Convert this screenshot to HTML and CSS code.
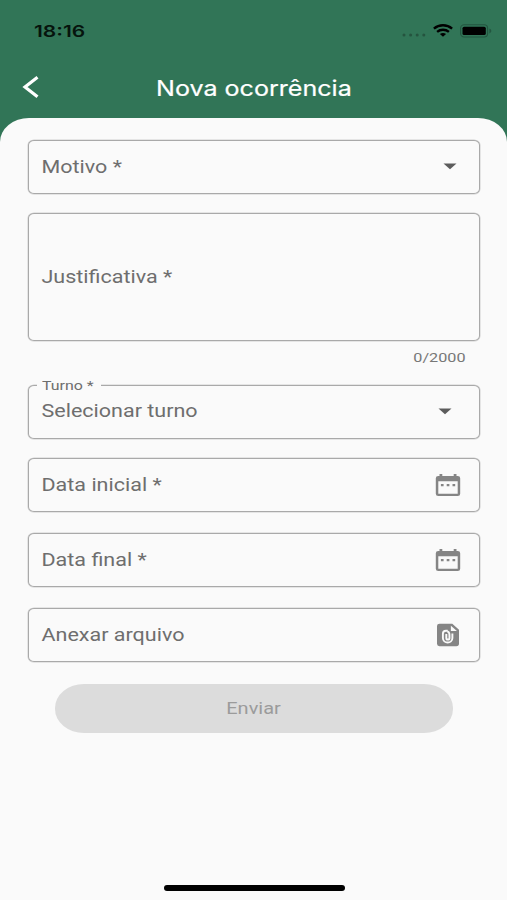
FILE: index.html
```html
<!DOCTYPE html>
<html lang="pt-BR">
<head>
<meta charset="utf-8">
<title>Nova ocorrência</title>
<link rel="stylesheet" href="styles.css">
</head>
<body>
<div class="screen">
  <div class="status">
    <span class="time">18:16</span>
    <div class="status-icons">
      <svg class="dots" width="24" height="4" viewBox="0 0 24 4"><g fill="#25543f"><circle cx="2" cy="2" r="1.5"/><circle cx="8.6" cy="2" r="1.5"/><circle cx="15.2" cy="2" r="1.5"/><circle cx="21.8" cy="2" r="1.5"/></g></svg>
      <svg class="wifi" width="20" height="13" viewBox="0 0 20 13"><g fill="none" stroke="#000" stroke-width="2.4"><path d="M.9 4.6C6.1.1 13.9.1 19.1 4.6"/><path d="M4.1 7.9c3.400-2.800 8.400-2.800 11.800 0"/></g><path d="M6.900 10c1.800-1.300 4.400-1.300 6.200 0L10 12.700z"/></svg>
      <svg class="battery" width="32" height="14" viewBox="0 0 32 14"><rect x=".6" y=".8" width="27" height="12.200" rx="3.500" fill="none" stroke="#235640" stroke-width="1.100"/><rect x="2.500" y="2.700" width="23.300" height="8.400" rx="1.600"/><path d="M29.400 4.600q2 1 2 2.400t-2 2.400z" fill="#235640"/></svg>
    </div>
  </div>
  <header class="appbar">
    <svg class="back" width="18" height="24" viewBox="0 0 18 24"><path d="M15.500 2.300 3 12l12.500 9.700" fill="none" stroke="#fff" stroke-width="3.200"/></svg>
    <h1 class="title">Nova ocorrência</h1>
  </header>
  <main class="sheet">
    <div class="field motivo"><span class="label">Motivo *</span><svg class="arrow" width="14" height="7" viewBox="0 0 14 7"><path d="M.5.5h13L7 6.300z"/></svg></div>
    <div class="field area"><span class="label">Justificativa *</span></div>
    <div class="counter"><span class="count">0/2000</span></div>
    <div class="field turno"><span class="float"><span class="float-text">Turno *</span></span><span class="label">Selecionar turno</span><svg class="arrow arrow-in" width="14" height="7" viewBox="0 0 14 7"><path d="M.5.5h13L7 6.300z"/></svg></div>
    <div class="field inicial"><span class="label">Data inicial *</span>
      <svg class="icon" width="26" height="24" viewBox="0 0 26 24"><path fill-rule="evenodd" d="M4.500 1h2.800v2h11.400V1h2.800v2h1.200q2.500 0 2.500 2.200v15.500q0 2.300-2.500 2.300H3.300Q.8 23 .8 20.700V5.200Q.8 3 3.300 3h1.200zM3.300 8.300v12.500h19.400V8.300zM5.900 10.900h2.700v2.300H5.900zm5.800 0h2.700v2.300h-2.700zm5.800 0h2.700v2.300h-2.700z"/></svg></div>
    <div class="field final"><span class="label">Data final *</span>
      <svg class="icon" width="26" height="24" viewBox="0 0 26 24"><path fill-rule="evenodd" d="M4.500 1h2.800v2h11.400V1h2.800v2h1.200q2.500 0 2.500 2.200v15.500q0 2.300-2.500 2.300H3.300Q.8 23 .8 20.700V5.200Q.8 3 3.300 3h1.200zM3.300 8.300v12.500h19.400V8.300zM5.900 10.900h2.700v2.300H5.900zm5.800 0h2.700v2.300h-2.700zm5.800 0h2.700v2.300h-2.700z"/></svg></div>
    <div class="field anexar"><span class="label">Anexar arquivo</span>
      <svg class="icon" width="26" height="24" viewBox="0 0 26 24"><path d="M4.500.8h12.800l6.700 6v14q0 2.400-2.600 2.400H4.500Q2 23.200 2 20.800V3.100Q2 .8 4.500.8z"/><path d="M15.900 2.700v5.200h6z" fill="#fafafa"/><path d="M12.700 7.700H11q-3.100 0-3.100 3v4.200c0 6.100 9.500 6.100 9.500 0V10.500M12.500 8.500c2 .7 2 1.700 2 6.400 0 2.200-3.200 2.200-3.200 0v-3.800" fill="none" stroke="#fafafa" stroke-width="1.900"/></svg></div>
    <button class="submit" disabled><span class="submit-text">Enviar</span></button>
    <div class="home"></div>
  </main>
</div>
</body>
</html>
```
FILE: styles.css
```css
* { box-sizing: border-box; }
body { margin: 0; background: #317557; font-family: Roboto, sans-serif; }
.screen { width: 507px; height: 900px; display: flex; flex-direction: column; overflow: hidden; }
svg { display: block; flex: none; }
span, h1 { white-space: nowrap; }

.status { height: 62px; padding: 0 15px 0 34px; display: flex; justify-content: space-between; }
.time { align-self: flex-start; margin-top: 21px; font: 600 16px/20px Inter, sans-serif; color: #06140d; transform: scaleX(1.31); transform-origin: left; }
.status-icons { display: flex; align-items: flex-start; padding-top: 24px; }
.dots { margin: 9px 7px 0 0; }
.battery { margin-left: 7px; }

.appbar { height: 56px; padding: 0 22px; display: grid; grid-template-columns: 18px 1fr 18px; align-items: center; }
.back { margin-top: -6px; }
.title { margin: -4px 0 0; justify-self: center; font: 400 22px/28px Inter, sans-serif; color: #fff; -webkit-text-stroke: .2px #fff; transform: scaleX(1.14); }

.sheet { flex: 1; padding: 22px 27.500px 0 28px; background: #fafafa; border-radius: 29px 29px 0 0 / 24px 24px 0 0; display: flex; flex-direction: column; }
.field { position: relative; flex: none; height: 53.500px; padding: 0 18px 0 12.500px; border: 1px solid #a9a9a9; box-shadow: 0 0 0 .5px #d0d0d0; border-radius: 6px / 5px; display: flex; align-items: center; justify-content: space-between; }
.label { font-size: 18px; line-height: 24px; color: #6e6e6e; transform: translateX(-.5px) scaleX(1.195); transform-origin: left; }
.arrow { margin: -1px 3.500px 0 0; fill: #5c5c5c; }
.arrow-in { margin-right: 8.500px; }
.icon { fill: #858585; }
.area { height: 128px; margin-top: 19.500px; }
.counter { height: 44px; padding: 6px 13.500px 0 0; display: flex; justify-content: flex-end; align-items: flex-start; }
.count { font-size: 13.500px; line-height: 20px; color: #777; transform: scaleX(1.2); transform-origin: right; }
.float { position: absolute; left: 8px; top: -10px; width: 63.500px; height: 18px; padding-left: 4.500px; background: #fafafa; }
.float-text { display: block; width: max-content; font-size: 13.500px; line-height: 18px; color: #6e6e6e; transform: scaleX(1.18); transform-origin: left; }
.turno .label { margin-top: -1px; }
.inicial { margin-top: 19.500px; }
.final, .anexar { margin-top: 21.700px; }
.submit { flex: none; width: 398px; height: 48.500px; margin: 22.600px 0 0 27px; padding: 0; border: 0; border-radius: 29px / 24px; background: #dcdcdc; font-family: inherit; }
.submit-text { display: inline-block; font-size: 16.500px; line-height: 24px; color: #9b9b9b; transform: scaleX(1.21); }
.home { width: 181px; height: 6px; margin: auto auto 9px 136px; border-radius: 3px; background: #000; }
```
